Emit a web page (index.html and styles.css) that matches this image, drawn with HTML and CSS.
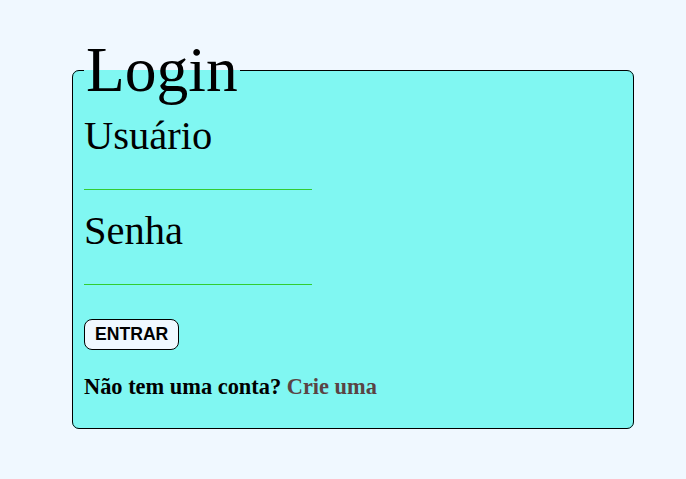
FILE: index.html
```html
<!DOCTYPE html>
<html lang="pt-BR">
<head>
<meta charset="utf-8">
<title>Login</title>
<link rel="stylesheet" href="styles.css">
</head>
<body>
<form class="page">
  <fieldset class="box">
    <legend class="title">Login</legend>
    <label class="label" for="usuario">Usuário</label>
    <input class="field field-first" id="usuario" type="text">
    <label class="label" for="senha">Senha</label>
    <input class="field" id="senha" type="password">
    <button class="btn" type="button">ENTRAR</button>
    <p class="note">Não tem uma conta? <a class="link" href="#">Crie uma</a></p>
  </fieldset>
</form>
</body>
</html>
```
FILE: styles.css
```css
html, body {
  margin: 0;
  padding: 0;
  background: #f0f8ff;
}
body {
  font-family: "Liberation Serif", "Times New Roman", serif;
  color: #000;
}
.page {
  padding: 33px 52px 0 72px;
}
.box {
  margin: 0;
  width: 562px;
  box-sizing: border-box;
  border: 1px solid #000;
  border-radius: 7px;
  background: #80f7f2;
  padding: 5px 11px 28px 11px;
  display: flex;
  flex-direction: column;
  align-items: flex-start;
}
.title {
  font-size: 63.5px;
  padding: 0 2px;
  margin-left: 0;
  line-height: normal;
}
.label {
  font-size: 40.5px;
  display: block;
}
.field {
  width: 228px;
  height: 31px;
  box-sizing: border-box;
  border: none;
  border-bottom: 1px solid #32cd32;
  background: transparent;
  margin: 0 0 18px 0;
  padding: 0;
  outline: none;
}
.field-first {
  margin-bottom: 17px;
}
.btn {
  margin-top: 16px;
  font-family: "Liberation Sans", Arial, sans-serif;
  font-weight: bold;
  font-size: 17.6px;
  background: #f0f8ff;
  border: 1px solid #000;
  border-radius: 8px;
  padding: 4px 10px;
  color: #000;
}
.note {
  margin: 24px 0 0 0;
  font-weight: bold;
  font-size: 22.4px;
}
.link {
  color: #5a4444;
  text-decoration: none;
}
```
